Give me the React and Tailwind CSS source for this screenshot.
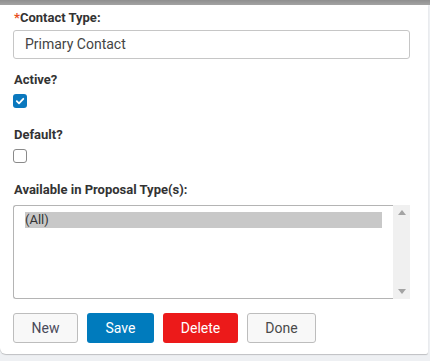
export default function App() {
  const font = { fontFamily: "Roboto, 'Liberation Sans', sans-serif" };
  return (
    <div className="w-[430px] h-[361px] bg-[#eef0f3] overflow-hidden" style={font}>
      <div className="h-[5px] w-full bg-gradient-to-b from-[#8f8f8f] to-[#a3a3a3]" />
      <div className="w-[428px] h-[349px] bg-white rounded-bl-[6px] rounded-br-[2px] shadow-[0_1px_1px_rgba(0,0,0,0.2)] pl-[13px] pt-[5px] flex flex-col">
        <div className="text-[13px] font-bold text-[#333] leading-[15px] h-[15px] pl-[1px]">
          <span className="text-[#e8501e]">*</span>Contact Type:
        </div>
        <div className="mt-[5px] w-[397px] h-[29px] border border-[#c6c6c6] rounded-[3px] flex items-center pl-[11px] text-[14px] text-[#444]">
          Primary Contact
        </div>
        <div className="mt-[13px] text-[13px] font-bold text-[#333] leading-[15px] h-[15px] pl-[1px]">Active?</div>
        <div className="mt-[7px] w-[14px] h-[14px] rounded-[3px] bg-[#0a78be] flex items-center justify-center">
          <svg width="10" height="10" viewBox="0 0 10 10">
            <path d="M1.8 5.2 L4 7.3 L8.3 2.8" stroke="white" strokeWidth="1.8" fill="none" strokeLinecap="round" strokeLinejoin="round" />
          </svg>
        </div>
        <div className="mt-[19px] text-[13px] font-bold text-[#333] leading-[15px] h-[15px] pl-[1px]">Default?</div>
        <div className="mt-[7px] w-[14px] h-[14px] rounded-[3px] border border-[#8a8a8a] bg-white" />
        <div className="mt-[19px] text-[13px] font-bold text-[#333] leading-[15px] h-[15px] pl-[1px]">Available in Proposal Type(s):</div>
        <div className="mt-[8px] w-[397px] h-[94px] flex">
          <div className="flex-1 border border-r-0 border-[#b4b4b4] rounded-l-[3px] pt-[6px] pl-[11px] pr-[11px]">
            <div className="h-[16px] bg-[#c8c8c8] text-[13px] text-[#333] leading-[16px]">(All)</div>
          </div>
          <div className="w-[17px] bg-[#f0f0f0] flex flex-col items-center justify-between py-[5px]">
            <svg width="8" height="5" viewBox="0 0 8 5"><path d="M0 5 L4 0 L8 5 Z" fill="#a3a3a3" /></svg>
            <svg width="8" height="5" viewBox="0 0 8 5"><path d="M0 0 L4 5 L8 0 Z" fill="#a3a3a3" /></svg>
          </div>
        </div>
        <div className="mt-[14px] flex gap-[9px] text-[14px]">
          <button className="w-[65px] h-[30px] border border-[#bdbdbd] rounded-[3px] bg-[#f8f8f8] text-[#4a4a5a]">New</button>
          <button className="w-[67px] h-[30px] rounded-[3px] bg-[#007bbd] text-white">Save</button>
          <button className="w-[75px] h-[30px] rounded-[3px] bg-[#ec1a1a] text-white">Delete</button>
          <button className="w-[69px] h-[30px] border border-[#bdbdbd] rounded-[3px] bg-[#f8f8f8] text-[#4a4a4a]">Done</button>
        </div>
      </div>
    </div>
  );
}
